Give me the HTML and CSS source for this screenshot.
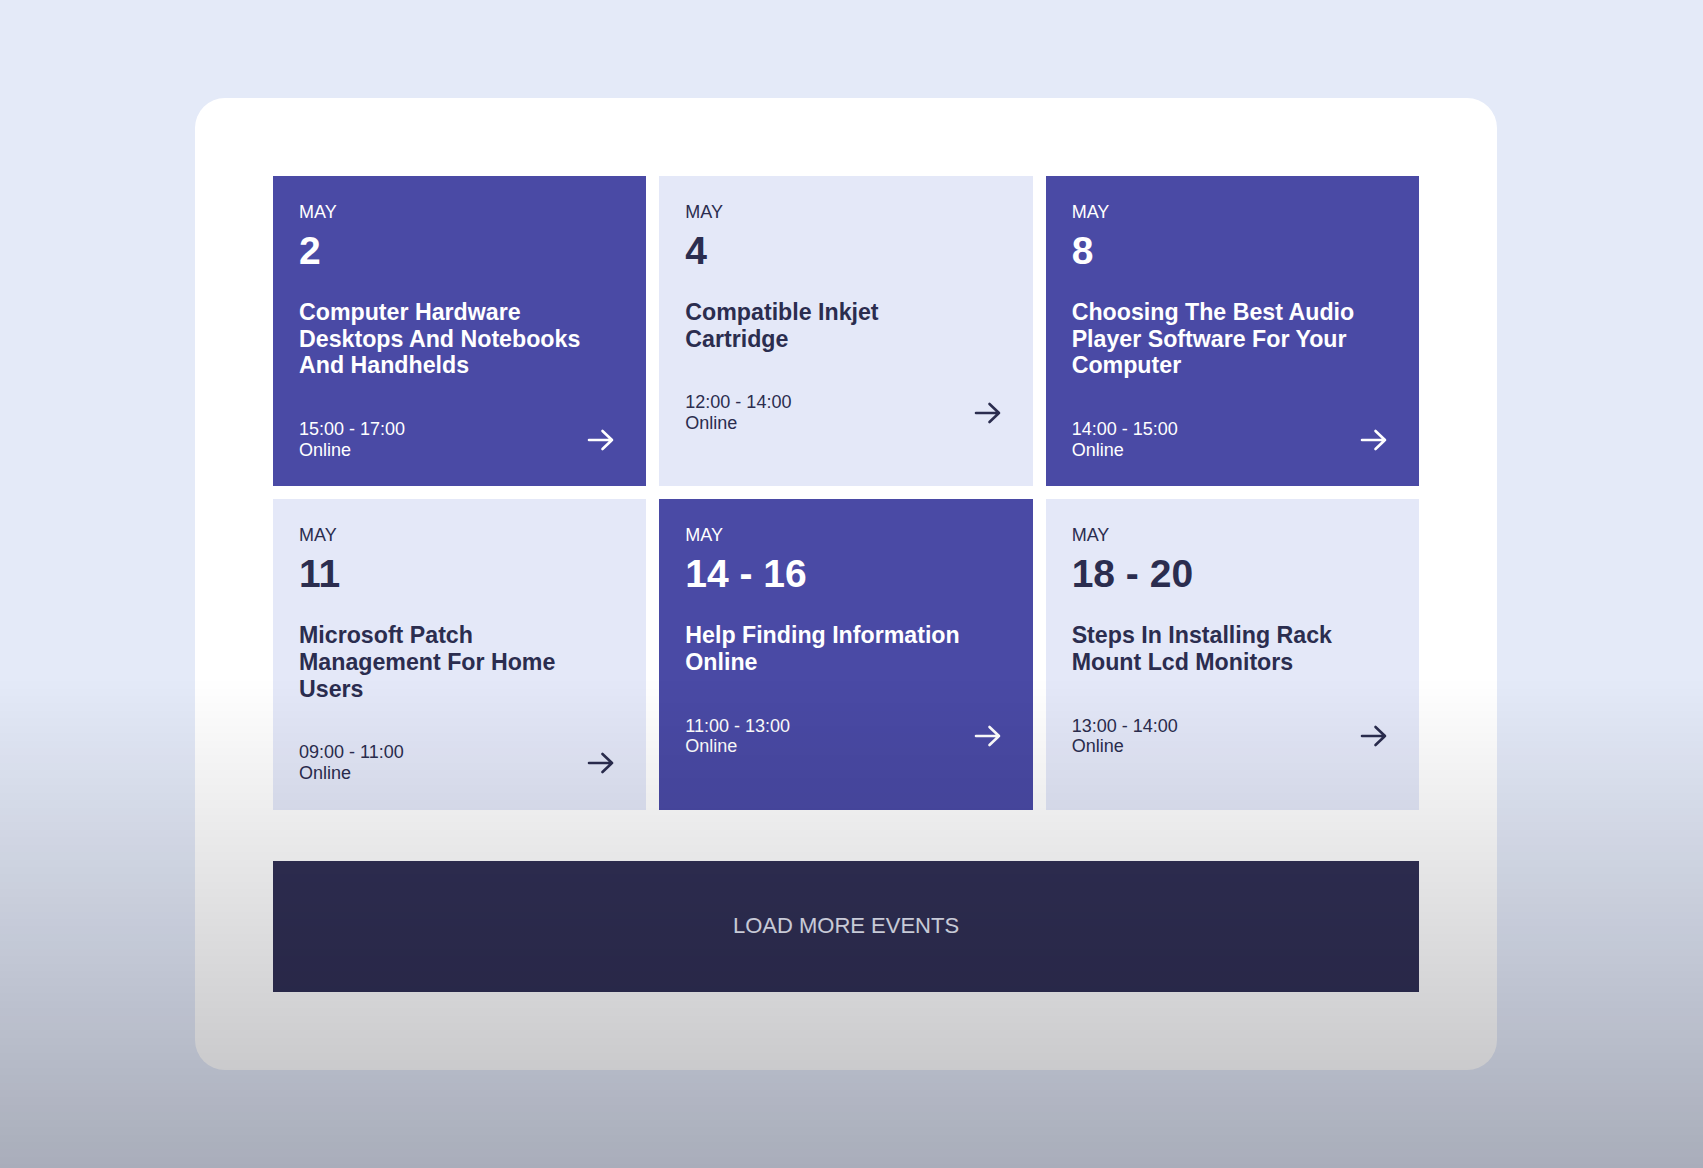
FILE: index.html
```html
<!DOCTYPE html>
<html lang="en">
<head>
<meta charset="utf-8">
<title>Events</title>
<link rel="stylesheet" href="styles.css">
</head>
<body>
<main class="panel">
  <section class="grid">
    <article class="card card-dark">
      <div class="month">MAY</div>
      <div class="day">2</div>
      <h3 class="title">Computer Hardware Desktops And Notebooks And Handhelds</h3>
      <div class="foot">
        <div class="meta"><div>15:00 - 17:00</div><div>Online</div></div>
        <svg class="arrow" viewBox="0 0 27 22" width="27" height="22"><path d="M2 11H25M15.5 2L25 11L15.5 20" fill="none" stroke="currentColor" stroke-width="2.6" stroke-linecap="round" stroke-linejoin="round"/></svg>
      </div>
    </article>
    <article class="card card-light">
      <div class="month">MAY</div>
      <div class="day">4</div>
      <h3 class="title">Compatible Inkjet Cartridge</h3>
      <div class="foot">
        <div class="meta"><div>12:00 - 14:00</div><div>Online</div></div>
        <svg class="arrow" viewBox="0 0 27 22" width="27" height="22"><path d="M2 11H25M15.5 2L25 11L15.5 20" fill="none" stroke="currentColor" stroke-width="2.6" stroke-linecap="round" stroke-linejoin="round"/></svg>
      </div>
    </article>
    <article class="card card-dark">
      <div class="month">MAY</div>
      <div class="day">8</div>
      <h3 class="title">Choosing The Best Audio Player Software For Your Computer</h3>
      <div class="foot">
        <div class="meta"><div>14:00 - 15:00</div><div>Online</div></div>
        <svg class="arrow" viewBox="0 0 27 22" width="27" height="22"><path d="M2 11H25M15.5 2L25 11L15.5 20" fill="none" stroke="currentColor" stroke-width="2.6" stroke-linecap="round" stroke-linejoin="round"/></svg>
      </div>
    </article>
    <article class="card card-light">
      <div class="month">MAY</div>
      <div class="day">11</div>
      <h3 class="title">Microsoft Patch Management For Home Users</h3>
      <div class="foot">
        <div class="meta"><div>09:00 - 11:00</div><div>Online</div></div>
        <svg class="arrow" viewBox="0 0 27 22" width="27" height="22"><path d="M2 11H25M15.5 2L25 11L15.5 20" fill="none" stroke="currentColor" stroke-width="2.6" stroke-linecap="round" stroke-linejoin="round"/></svg>
      </div>
    </article>
    <article class="card card-dark">
      <div class="month">MAY</div>
      <div class="day">14 - 16</div>
      <h3 class="title">Help Finding Information Online</h3>
      <div class="foot">
        <div class="meta"><div>11:00 - 13:00</div><div>Online</div></div>
        <svg class="arrow" viewBox="0 0 27 22" width="27" height="22"><path d="M2 11H25M15.5 2L25 11L15.5 20" fill="none" stroke="currentColor" stroke-width="2.6" stroke-linecap="round" stroke-linejoin="round"/></svg>
      </div>
    </article>
    <article class="card card-light">
      <div class="month">MAY</div>
      <div class="day">18 - 20</div>
      <h3 class="title">Steps In Installing Rack Mount Lcd Monitors</h3>
      <div class="foot">
        <div class="meta"><div>13:00 - 14:00</div><div>Online</div></div>
        <svg class="arrow" viewBox="0 0 27 22" width="27" height="22"><path d="M2 11H25M15.5 2L25 11L15.5 20" fill="none" stroke="currentColor" stroke-width="2.6" stroke-linecap="round" stroke-linejoin="round"/></svg>
      </div>
    </article>
  </section>
  <button class="load-more" type="button">LOAD MORE EVENTS</button>
</main>
<div class="shade"></div>
</body>
</html>
```

FILE: styles.css
```css
* { box-sizing: border-box; }

html, body {
  margin: 0;
  padding: 0;
}

body {
  background: #e4eaf8;
  font-family: "Liberation Sans", Arial, sans-serif;
  min-height: 1168px;
  padding: 98px 0 0 195px;
  overflow: hidden;
}

.panel {
  width: 1302px;
  height: 972px;
  background: #ffffff;
  border-radius: 30px;
  padding: 78px;
}

.grid {
  display: grid;
  grid-template-columns: repeat(3, 1fr);
  column-gap: 13px;
  row-gap: 13px;
}

.card {
  padding: 25px 32px 26px 26px;
  display: flex;
  flex-direction: column;
}

.card-dark {
  background: #4a4aa5;
  color: #ffffff;
}

.card-light {
  background: #e4e8f8;
  color: #2b2d4f;
}

.month {
  font-size: 18px;
  line-height: 22px;
}

.day {
  margin-top: 5px;
  font-size: 39px;
  line-height: 46px;
  font-weight: 700;
}

.title {
  margin: 25px 0 0 0;
  max-width: 294px;
  font-size: 23.2px;
  line-height: 26.67px;
  font-weight: 700;
}

.foot {
  margin-top: 40px;
  display: flex;
  align-items: center;
  justify-content: space-between;
}

.meta {
  font-size: 18px;
  line-height: 20.7px;
}

.arrow {
  display: block;
  color: inherit;
}

.load-more {
  display: block;
  width: 100%;
  height: 131px;
  margin-top: 51px;
  border: 0;
  background: #313055;
  color: #e6e9f6;
  font-family: "Liberation Sans", Arial, sans-serif;
  font-size: 22px;
  cursor: pointer;
}

.shade {
  position: fixed;
  inset: 0;
  pointer-events: none;
  background: linear-gradient(to bottom, rgba(0, 0, 0, 0) 0%, rgba(0, 0, 0, 0) 58%, rgba(0, 0, 10, 0.26) 100%);
}
```
